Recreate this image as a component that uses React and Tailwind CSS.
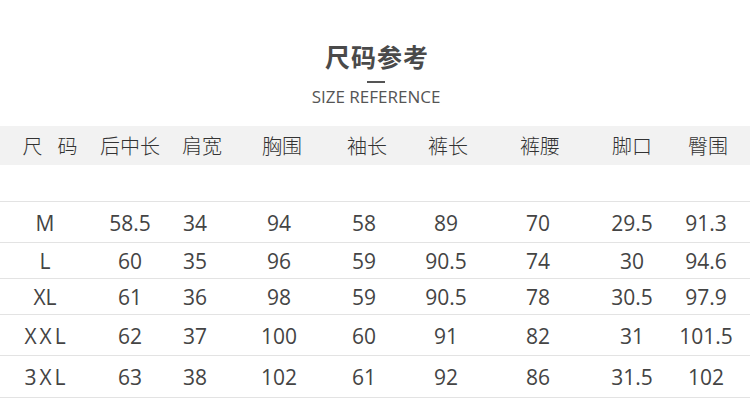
import React from 'react';

const headers = ['尺 码', '后中长', '肩宽', '胸围', '袖长', '裤长', '裤腰', '脚口', '臀围'];

const rows = [
  { h: 'h-[41px]', cells: ['M', '58.5', '34', '94', '58', '89', '70', '29.5', '91.3'] },
  { h: 'h-[36px]', cells: ['L', '60', '35', '96', '59', '90.5', '74', '30', '94.6'] },
  { h: 'h-[36px]', cells: ['XL', '61', '36', '98', '59', '90.5', '78', '30.5', '97.9'] },
  { h: 'h-[41px]', cells: ['XXL', '62', '37', '100', '60', '91', '82', '31', '101.5'] },
  { h: 'h-[42px]', cells: ['3XL', '63', '38', '102', '61', '92', '86', '31.5', '102'] },
];

// header and body columns sit on slightly different centres in the picture
const headCols = 'grid grid-cols-[100px_60px_84px_76px_94px_68px_116px_68px_84px]';
const bodyCols = 'grid grid-cols-[90px_80px_50px_118px_52px_112px_72px_116px_32px]';

export default function App() {
  return (
    <div className="w-[750px] h-[414px] bg-white overflow-hidden" style={{ fontFamily: '"Open Sans", "Noto Sans CJK SC", sans-serif' }}>
      {/* Title */}
      <div className="flex flex-col items-center pt-[40px]">
        <h1 className="text-[25px] leading-[32px] font-bold text-[#4a4a4a] tracking-[1px] ml-[4px]" style={{ fontFamily: '"Noto Sans CJK SC", sans-serif' }}>
          尺码参考
        </h1>
        <div className="w-[18px] h-[2px] bg-[#555] mt-[9px] ml-[2px]"></div>
        <p className="text-[17px] leading-[20px] text-[#555] mt-[4px] ml-[2px]">SIZE REFERENCE</p>
      </div>

      {/* Header band */}
      <div className={`${headCols} mt-[19px] h-[39px] bg-[#f2f2f2] items-center text-[20px] text-[#333] font-light`} style={{ fontFamily: '"Noto Sans CJK SC", sans-serif' }}>
        {headers.map((t, i) => (
          <div key={i} className="flex justify-center gap-[15px]">
            {i === 0 ? (
              <>
                <span>尺</span>
                <span>码</span>
              </>
            ) : (
              t
            )}
          </div>
        ))}
      </div>

      <div className="h-[36px]"></div>

      {/* Rows */}
      <div className="border-t border-[#e3e3e3]">
        {rows.map((r, ri) => (
          <div key={ri} className={`${bodyCols} ${r.h} items-center border-b border-[#e3e3e3] text-[21px] text-[#444] pt-[3px]`}>
            {r.cells.map((c, ci) => (
              <div key={ci} className="flex justify-center whitespace-nowrap">
                <span className={ci === 0 && c.length === 3 ? 'tracking-[3px] ml-[3px]' : ''}>{c}</span>
              </div>
            ))}
          </div>
        ))}
      </div>
    </div>
  );
}
